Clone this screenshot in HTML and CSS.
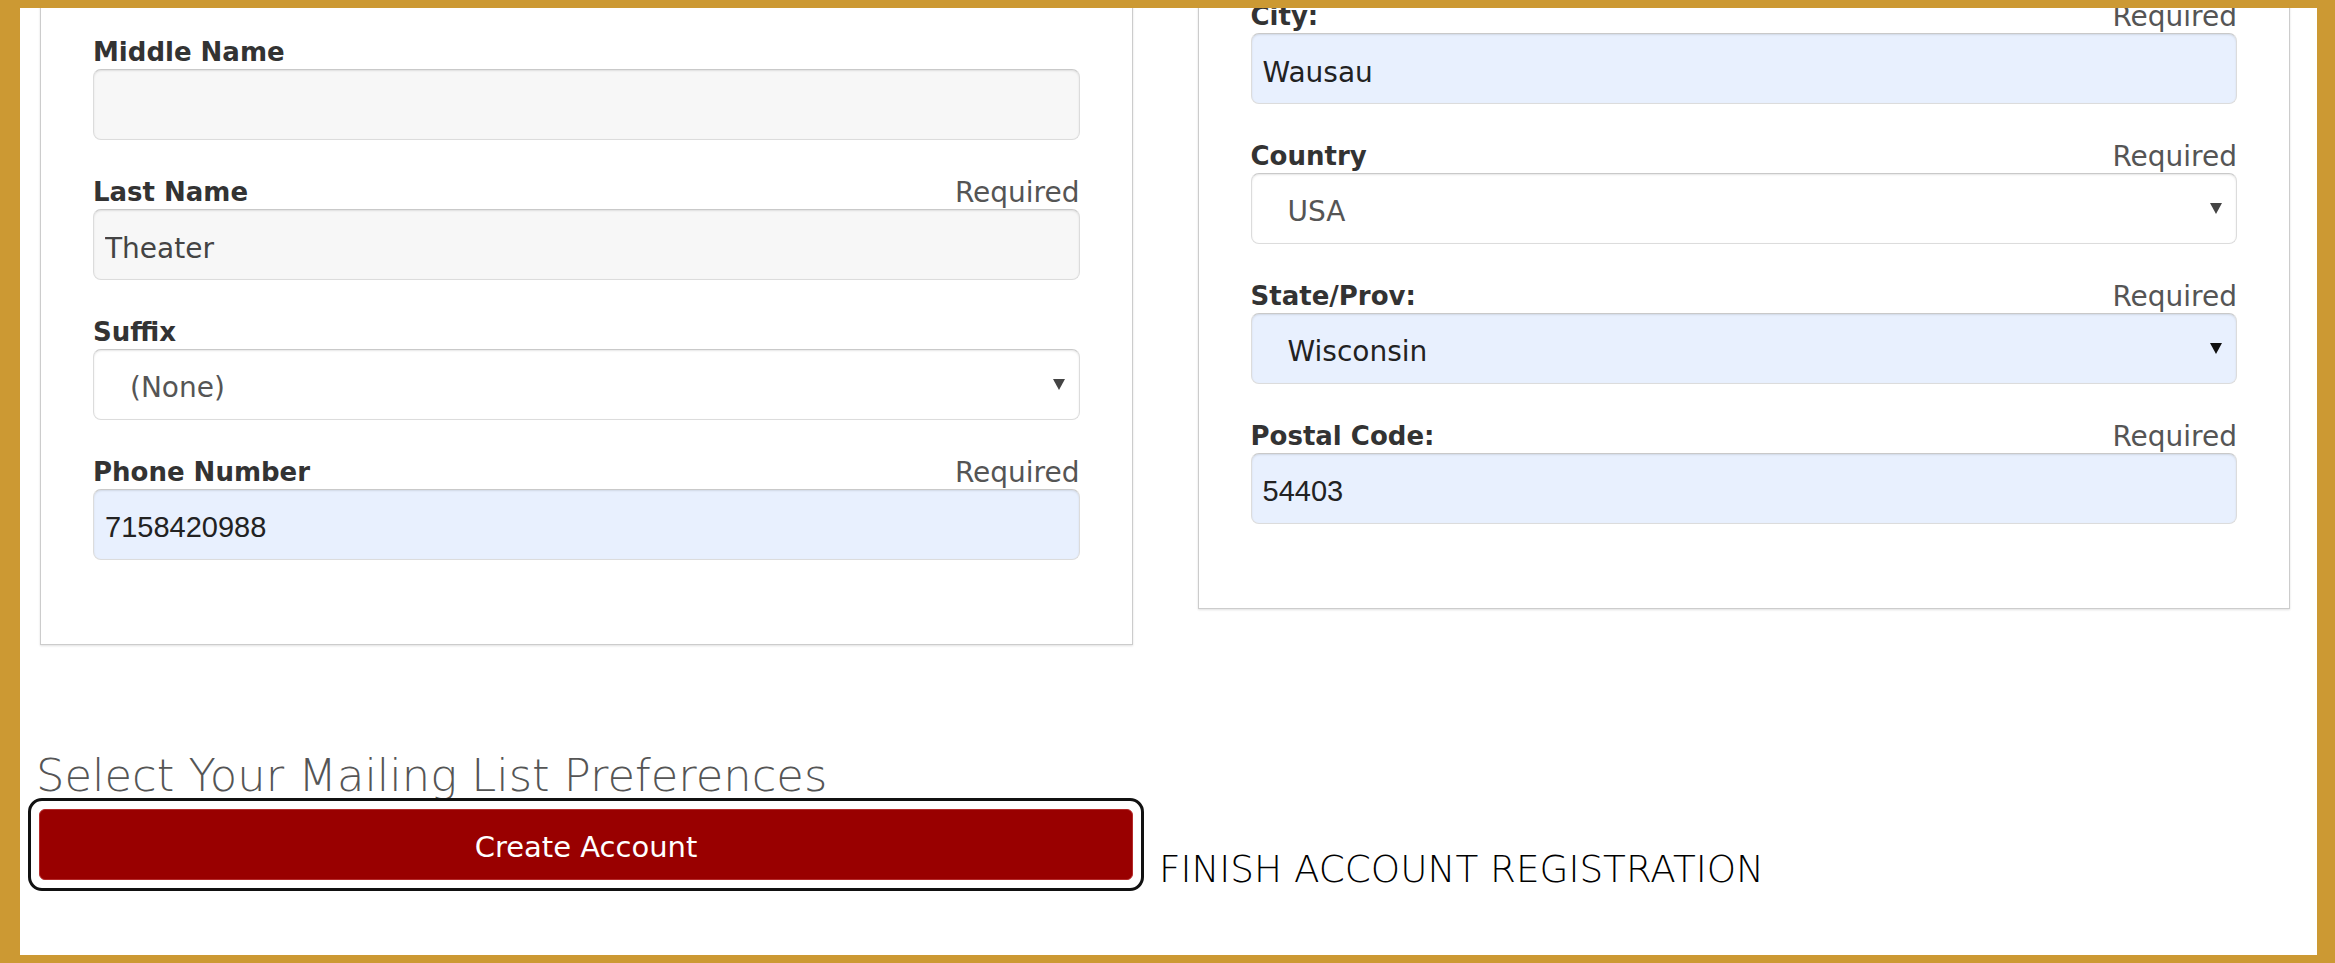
FILE: index.html
```html
<!DOCTYPE html>
<html lang="en">
<head>
<meta charset="utf-8">
<title>Create Account</title>
<link rel="stylesheet" href="styles.css">
</head>
<body>
<div class="frame">
  <div class="columns">
    <section class="panel panel-left">
      <div class="field">
        <div class="field-head"><label class="label">Middle Name</label></div>
        <input class="control" type="text" value="" readonly>
      </div>
      <div class="field">
        <div class="field-head"><label class="label">Last Name</label><span class="req">Required</span></div>
        <input class="control" type="text" value="Theater" readonly>
      </div>
      <div class="field">
        <div class="field-head"><label class="label">Suffix</label></div>
        <div class="control control-select"><span class="select-value">(None)</span><span class="caret"></span></div>
      </div>
      <div class="field">
        <div class="field-head"><label class="label">Phone Number</label><span class="req">Required</span></div>
        <input class="control control-autofill control-sys" type="text" value="7158420988" readonly>
      </div>
    </section>
    <section class="panel panel-right">
      <div class="field">
        <div class="field-head"><label class="label">City:</label><span class="req">Required</span></div>
        <input class="control control-autofill" type="text" value="Wausau" readonly>
      </div>
      <div class="field">
        <div class="field-head"><label class="label">Country</label><span class="req">Required</span></div>
        <div class="control control-select"><span class="select-value">USA</span><span class="caret"></span></div>
      </div>
      <div class="field">
        <div class="field-head"><label class="label">State/Prov:</label><span class="req">Required</span></div>
        <div class="control control-select control-autofill"><span class="select-value select-dark">Wisconsin</span><span class="caret caret-dark"></span></div>
      </div>
      <div class="field">
        <div class="field-head"><label class="label">Postal Code:</label><span class="req">Required</span></div>
        <input class="control control-autofill control-sys" type="text" value="54403" readonly>
      </div>
    </section>
  </div>
  <h2 class="prefs-title">Select Your Mailing List Preferences</h2>
  <div class="submit-row">
    <div class="highlight"><button class="btn-create" type="button">Create Account</button></div>
    <span class="annotation">FINISH ACCOUNT REGISTRATION</span>
  </div>
</div>
</body>
</html>
```
FILE: styles.css
```css
* { box-sizing: border-box; }
html, body { margin: 0; padding: 0; }
body {
  width: 2335px;
  height: 963px;
  overflow: hidden;
  background: #fff;
  font-family: "DejaVu Sans", "Liberation Sans", sans-serif;
}
.frame {
  width: 2335px;
  height: 963px;
  border-style: solid;
  border-color: #cc9933;
  border-width: 8px 18px 8px 20px;
  overflow: hidden;
  background: #fff;
}
.columns {
  display: grid;
  grid-template-columns: 1fr 1fr;
  column-gap: 65px;
  padding: 0 27px 0 20px;
  margin-top: -100px;
  align-items: start;
}
.panel {
  display: flex;
  flex-direction: column;
  gap: 36px;
  border: 1px solid #cccccc;
  box-shadow: 0 1px 2px rgba(0, 0, 0, 0.12);
  padding: 127px 52px 84px 52px;
  background: #fff;
}
.panel-right { padding-top: 91px; }
.field { display: flex; flex-direction: column; }
.field-head {
  display: flex;
  justify-content: space-between;
  height: 33px;
  line-height: 33px;
  white-space: nowrap;
}
.label {
  font-weight: 700;
  font-size: 26px;
  color: #333;
}
.req {
  font-size: 28px;
  color: #555;
}
.control {
  display: block;
  width: 100%;
  height: 71px;
  margin: 0;
  padding: 7px 11px 0 11px;
  border: 1px solid #dcdcdc;
  border-top-color: #c9c9c9;
  border-radius: 8px;
  box-shadow: inset 0 1px 2px rgba(0, 0, 0, 0.1);
  background: #f7f7f7;
  font-family: "DejaVu Sans", "Liberation Sans", sans-serif;
  font-size: 28px;
  color: #444;
  outline: none;
}
.control-autofill { background: #e8f0fe; color: #222; }
.control-sys {
  padding-top: 5px;
  font-family: "Liberation Sans", Arial, sans-serif;
  font-size: 29px;
  color: #222;
}
.control-select {
  display: flex;
  align-items: center;
  padding: 7px 14px 0 36px;
  background: #fff;
}
.control-select.control-autofill { background: #e8f0fe; }
.select-value { color: #555; line-height: 1.164; }
.select-dark { color: #222; }
.caret {
  margin-left: auto;
  margin-top: -7px;
  width: 0;
  height: 0;
  border-left: 6px solid transparent;
  border-right: 6px solid transparent;
  border-top: 11px solid #444;
}
.caret-dark { border-top-color: #111; }
.prefs-title {
  margin: 108px 0 0 16px;
  font-size: 44.8px;
  font-weight: 200;
  line-height: 45px;
  color: #555;
  white-space: nowrap;
}
.submit-row {
  display: flex;
  align-items: flex-end;
  gap: 15px;
  padding-left: 8px;
}
.highlight {
  width: 1116px;
  padding: 8px;
  border: 3px solid #111;
  border-radius: 14px;
}
.btn-create {
  display: block;
  width: 100%;
  height: 71px;
  margin: 0;
  padding: 4px 0 0 0;
  background: #990000;
  border: 1px solid #b52a2a;
  border-radius: 6px;
  color: #fff;
  font-family: "DejaVu Sans", "Liberation Sans", sans-serif;
  font-size: 29px;
  cursor: pointer;
}
.annotation {
  margin-bottom: 2px;
  font-size: 37.3px;
  font-weight: 200;
  line-height: 40px;
  color: #000;
  white-space: nowrap;
}
```
